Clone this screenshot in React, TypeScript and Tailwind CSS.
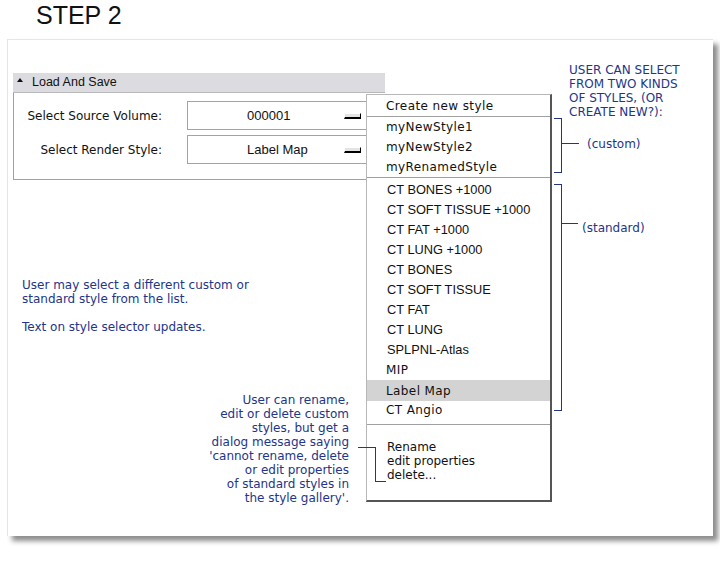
import React from 'react';

const NOTE = "text-[12px] leading-[14px] text-[#23358a] font-['DejaVu_Sans',sans-serif]";
const ITEM = "flex items-center pl-[19px] text-[12px] tracking-[0.4px] font-['DejaVu_Sans',sans-serif] text-[#111]";

const customStyles = ['myNewStyle1', 'myNewStyle2', 'myRenamedStyle'];
const standardStyles = [
  'CT BONES +1000',
  'CT SOFT TISSUE +1000',
  'CT FAT +1000',
  'CT LUNG +1000',
  'CT BONES',
  'CT SOFT TISSUE',
  'CT FAT',
  'CT LUNG',
  'SPLPNL-Atlas',
];

// little raised button at the right of the combo boxes
const ComboButton = () => (
  <div className="w-[17px] h-[6px] bg-[#e4e4e4] border-t border-l border-t-white border-l-white border-b-2 border-r border-b-black border-r-black" />
);

const ComboBox = ({ value }: { value: string }) => (
  <div className="flex items-center justify-between w-[184px] h-[29px] border border-[#a3a3a3] bg-white pl-[59px] pr-[9px]">
    <span className="text-[13px] text-[#111]">{value}</span>
    <ComboButton />
  </div>
);

const Row = ({ label, value }: { label: string; value: string }) => (
  <div className="flex items-center gap-[25px]">
    <div className="w-[148px] text-right text-[12px] text-[#111] font-['DejaVu_Sans',sans-serif]">{label}</div>
    <ComboBox value={value} />
  </div>
);

export default function App() {
  return (
    <div className="w-[720px] h-[576px] bg-white font-['Liberation_Sans',Arial,sans-serif] overflow-hidden">
      <h1 className="pl-[36px] h-[30px] leading-[30px] text-[25px] text-[#111]">STEP 2</h1>

      {/* mockup sheet */}
      <div className="relative ml-[7px] mt-[9px] w-[706px] h-[497px] bg-white border-t border-l border-[#e6e6e6] shadow-[5px_5px_5px_rgba(0,0,0,0.45)]">
        {/* Load And Save panel */}
        <div className="ml-[5px] mt-[33px] w-[372px]">
          <div className="flex items-center h-[20px] bg-[#dcdbe0] border-b border-[#b9b9bd] pl-[4px]">
            <svg width="6" height="4" viewBox="0 0 6 4" className="mb-[6px]">
              <path d="M0 4 L3 0 L6 4 Z" fill="#111" />
            </svg>
            <span className="ml-[9px] text-[12.5px] text-[#111]">Load And Save</span>
          </div>
          <div className="h-[87px] border-l border-b border-[#a0a0a0] pt-[8px] flex flex-col gap-[5px]">
            <Row label="Select Source Volume:" value="000001" />
            <Row label="Select Render Style:" value="Label Map" />
          </div>
        </div>

        <p className={`ml-[14px] mt-[98px] ${NOTE}`}>
          User may select a different custom or
          <br />
          standard style from the list.
          <br />
          <br />
          Text on style selector updates.
        </p>

        {/* open style menu */}
        <div className="absolute left-[358px] top-[54px] w-[186px] h-[408px] bg-white border-t border-l border-[#b8b8b8] border-r-2 border-b-2 border-r-[#555] border-b-[#555]">
          <div className={`h-[21px] ${ITEM}`}>Create new style</div>
          <div className="h-px bg-[#a0a0a0]" />
          {customStyles.map((s) => (
            <div key={s} className={`h-[20px] ${ITEM}`}>
              {s}
            </div>
          ))}
          <div className="h-px bg-[#a0a0a0]" />
          <div className="pt-[2px]">
            {standardStyles.map((s) => (
              <div key={s} className="h-[20px] flex items-center pl-[20px] text-[12.8px] text-[#111]">
                {s}
              </div>
            ))}
          </div>
          <div className={`h-[20px] ${ITEM}`}>MIP</div>
          <div className={`h-[21px] bg-[#d3d3d3] ${ITEM}`}>Label Map</div>
          <div className={`h-[17px] ${ITEM}`}>CT Angio</div>
          <div className="mt-[6px] h-px bg-[#a0a0a0]" />
          <div className="pt-[15px] pl-[20px] text-[12px] leading-[14px] font-['DejaVu_Sans',sans-serif] text-[#111]">
            <div>Rename</div>
            <div>edit properties</div>
            <div>delete...</div>
          </div>
        </div>

        {/* right hand notes with brackets */}
        <div className="absolute left-[546px] top-[23px] flex flex-col">
          <p className={`pl-[15px] ${NOTE}`}>
            USER CAN SELECT
            <br />
            FROM TWO KINDS
            <br />
            OF STYLES, (OR
            <br />
            CREATE NEW?):
          </p>
          <div className="-mt-px flex items-center">
            <div className="w-[8px] h-[55px] border-t border-r border-b border-[#23358a]" />
            <div className="w-[17px] h-px bg-[#23358a] -mt-[4px]" />
            <span className={`ml-[8px] -mt-[3px] ${NOTE}`}>(custom)</span>
          </div>
          <div className="mt-[11px] flex items-start">
            <div className="w-[8px] h-[227px] border-t border-r border-b border-[#23358a]" />
            <div className="mt-[39px] w-[16px] h-px bg-[#23358a]" />
            <span className={`ml-[4px] mt-[37px] ${NOTE}`}>(standard)</span>
          </div>
        </div>

        {/* bottom note pointing at the edit commands */}
        <div className="absolute right-[327px] top-[353px] flex items-start">
          <p className={`text-right ${NOTE}`}>
            User can rename,
            <br />
            edit or delete custom
            <br />
            styles, but get a
            <br />
            dialog message saying
            <br />
            'cannot rename, delete
            <br />
            or edit properties
            <br />
            of standard styles in
            <br />
            the style gallery'.
          </p>
          <div className="ml-[9px] mt-[54px] w-[17px] h-px bg-[#23358a]" />
          <div className="mt-[54px] w-[11px] h-[35px] border-l border-b border-[#23358a]" />
        </div>
      </div>
    </div>
  );
}
